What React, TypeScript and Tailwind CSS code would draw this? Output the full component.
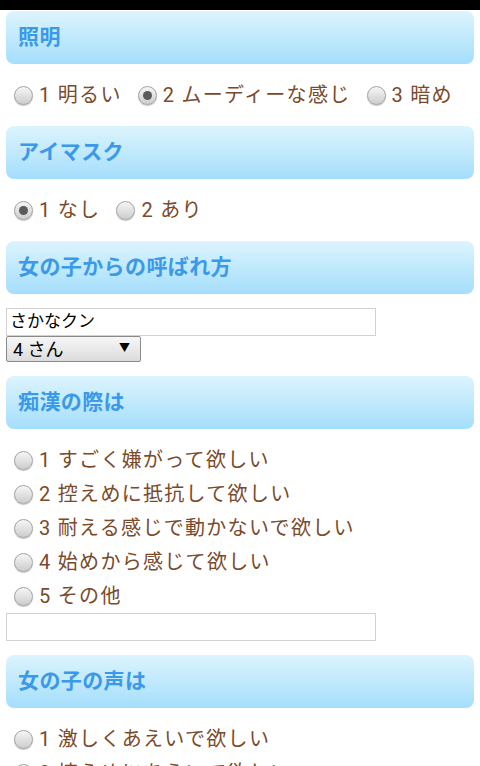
import React from "react";

const font = { fontFamily: 'Roboto, "Noto Sans CJK JP", sans-serif' };

const Radio = ({ checked = false }: { checked?: boolean }) => (
  <span className="relative inline-flex h-[19px] w-[19px] shrink-0 items-center justify-center rounded-full border border-[#a3a3a3] bg-gradient-to-b from-[#f6f6f6] to-[#cdcdcd] shadow-[0_1px_1px_rgba(0,0,0,0.25)]">
    {checked && <span className="h-[9px] w-[9px] rounded-full bg-[#5a5a5a]" />}
  </span>
);

const Option = ({ label, checked }: { label: string; checked?: boolean }) => (
  <label className="mr-[16px] inline-flex h-[34px] items-center gap-[6px]">
    <Radio checked={checked} />
    <span className="tracking-[1.3px]">{label}</span>
  </label>
);

const Heading = ({ title }: { title: string }) => (
  <div className="mx-[6px] flex h-[53px] items-center rounded-[8px] bg-gradient-to-b from-[#dcf4fd] to-[#a4defc] pl-[12px] text-[21px] font-bold tracking-[0.4px] text-[#3b99e9]">
    {title}
  </div>
);

const TextBox = ({ value = "" }: { value?: string }) => (
  <div className="ml-[6px] flex h-[28px] w-[370px] items-center border border-[#d2d2d2] bg-white px-[3px] text-[17px] text-black">
    {value}
  </div>
);

export default function App() {
  return (
    <div className="min-h-[766px] w-[480px] overflow-hidden bg-white text-[20px] text-[#7a4a2b]" style={font}>
      <div className="h-[10px] bg-black" />
      <div className="pt-[1px]">
        <Heading title="照明" />
        <div className="flex py-[14px] pl-[14px]">
          <Option label="1 明るい" />
          <Option label="2 ムーディーな感じ" checked />
          <Option label="3 暗め" />
        </div>

        <Heading title="アイマスク" />
        <div className="flex py-[14px] pl-[14px]">
          <Option label="1 なし" checked />
          <Option label="2 あり" />
        </div>

        <Heading title="女の子からの呼ばれ方" />
        <div className="py-[14px]">
          <TextBox value="さかなクン" />
          <div className="ml-[6px] flex h-[26px] w-[135px] items-center justify-between rounded-[2px] border border-[#8a8a8a] bg-gradient-to-b from-[#f7f7f7] to-[#dcdcdc] pl-[6px] pr-[10px] text-[18px] text-black">
            <span>4 さん</span>
            <span className="text-[11px]">▼</span>
          </div>
        </div>

        <Heading title="痴漢の際は" />
        <div className="py-[14px]">
          <div className="flex flex-col pl-[14px]">
            <Option label="1 すごく嫌がって欲しい" />
            <Option label="2 控えめに抵抗して欲しい" />
            <Option label="3 耐える感じで動かないで欲しい" />
            <Option label="4 始めから感じて欲しい" />
            <Option label="5 その他" />
          </div>
          <TextBox />
        </div>

        <Heading title="女の子の声は" />
        <div className="flex flex-col py-[14px] pl-[14px]">
          <Option label="1 激しくあえいで欲しい" />
          <Option label="2 控えめにあえいで欲しい" />
        </div>
      </div>
    </div>
  );
}
